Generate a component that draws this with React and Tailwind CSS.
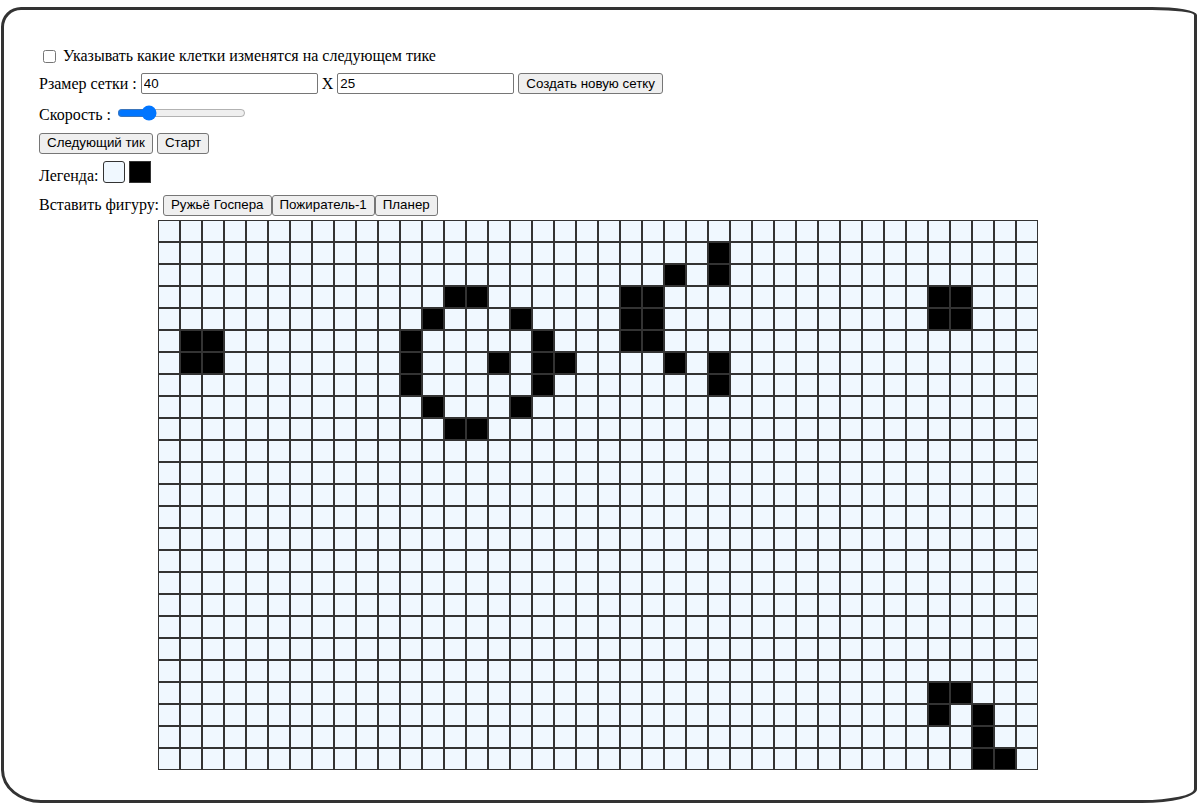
import { useState } from 'react'

const COLS = 40
const ROWS = 25

const ALIVE = [
  [5, 1], [5, 2], [6, 1], [6, 2],
  [3, 13], [3, 14], [4, 12], [4, 16], [5, 11], [6, 11], [7, 11],
  [5, 17], [6, 15], [6, 17], [6, 18], [7, 17], [8, 12], [8, 16], [9, 13], [9, 14],
  [3, 21], [3, 22], [4, 21], [4, 22], [5, 21], [5, 22],
  [2, 23], [6, 23], [1, 25], [2, 25], [6, 25], [7, 25],
  [3, 35], [3, 36], [4, 35], [4, 36],
  [21, 35], [21, 36], [22, 35], [22, 37], [23, 37], [24, 37], [24, 38],
]

const btn =
  "bg-[#efefef] border border-[#767676] rounded-[3px] px-[7px] h-[21px] text-[13.33px] leading-none text-black font-['Liberation_Sans',Arial,sans-serif] hover:bg-[#e5e5e5]"

const field =
  "w-[177px] h-[21px] border border-[#767676] rounded-[2px] px-[2px] text-[13.33px] text-black bg-white font-['Liberation_Sans',Arial,sans-serif]"

function Grid({ cells }) {
  return (
    <div className="grid grid-cols-[repeat(40,22px)]">
      {cells.map((alive, i) => (
        <div
          key={i}
          className={
            alive
              ? 'w-[22px] h-[22px] border border-[#333] bg-black'
              : 'w-[22px] h-[22px] border border-[#333] bg-[#f0f8ff]'
          }
        />
      ))}
    </div>
  )
}

export default function App() {
  const [cells] = useState(() => {
    const arr = new Array(COLS * ROWS).fill(false)
    ALIVE.forEach(([r, c]) => (arr[r * COLS + c] = true))
    return arr
  })
  const [w, setW] = useState('40')
  const [h, setH] = useState('25')
  const [speed, setSpeed] = useState(21)
  const [hint, setHint] = useState(false)

  return (
    <div className="bg-white pt-[7px] px-px h-[810px] font-['Liberation_Serif','Times_New_Roman',serif] text-[16px] text-black">
      <div className="h-[796px] border-[3px] border-[#333] [border-radius:20px_45px_55px_40px/20px_8px_14px_33px] pl-[35px] pr-[37px] pt-[36px]">
        <label className="flex items-center h-[20px]">
          <input
            type="checkbox"
            checked={hint}
            onChange={(e) => setHint(e.target.checked)}
            className="ml-[4px] mr-[3px] w-[13px] h-[13px]"
          />
          <span className="ml-[4px]">Указывать какие клетки изменятся на следующем тике</span>
        </label>

        <div className="flex items-center h-[23px] mt-[6px]">
          <span className="mr-[4px]">Рзамер сетки :</span>
          <input className={field} value={w} onChange={(e) => setW(e.target.value)} />
          <span className="mx-[4px]">X</span>
          <input className={field} value={h} onChange={(e) => setH(e.target.value)} />
          <button className={btn + ' ml-[4px]'}>Создать новую сетку</button>
        </div>

        <div className="flex items-center h-[20px] mt-[8px]">
          <span className="mr-[4px] mt-[3px]">Скорость :</span>
          <input
            type="range"
            min="0"
            max="100"
            value={speed}
            onChange={(e) => setSpeed(+e.target.value)}
            className="mx-[2px] w-[129px] h-[16px] accent-[#0075ff]"
          />
        </div>

        <div className="flex items-center gap-[4px] h-[22px] mt-[9px]">
          <button className={btn}>Следующий тик</button>
          <button className={btn}>Старт</button>
        </div>

        <div className="flex items-end gap-[4px] h-[24px] mt-[7px]">
          <span className="leading-[18px]">Легенда:</span>
          <div className="w-[22px] h-[22px] border border-[#333] rounded-[3px] bg-[#f0f8ff] mb-[2px]" />
          <div className="w-[22px] h-[22px] border border-[#333] bg-black mb-[2px]" />
        </div>

        <div className="flex items-center h-[22px] mt-[9px]">
          <span className="mr-[4px]">Вставить фигуру:</span>
          <button className={btn}>Ружьё Госпера</button>
          <button className={btn}>Пожиратель-1</button>
          <button className={btn}>Планер</button>
        </div>

        <div className="flex justify-center mt-[4px]">
          <Grid cells={cells} />
        </div>
      </div>
    </div>
  )
}
